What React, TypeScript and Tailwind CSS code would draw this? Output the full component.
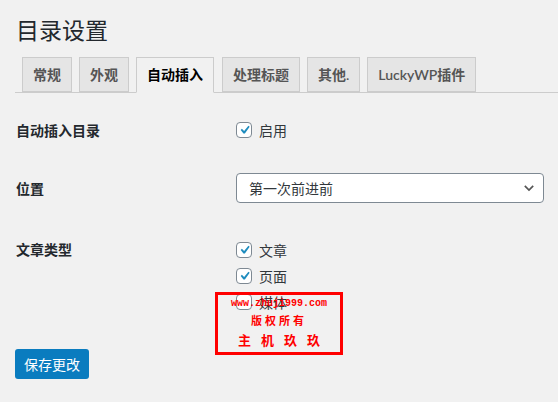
import React from "react";

const tabs = ["常规", "外观", "自动插入", "处理标题", "其他.", "LuckyWP插件"];

const CheckBox: React.FC<{ checked?: boolean }> = ({ checked }) => (
  <span className="flex items-center justify-center w-4 h-4 rounded-[4px] border border-[#7e8993] bg-white shrink-0">
    {checked && (
      <svg width="18" height="18" viewBox="0 0 20 20" className="-mr-px">
        <path d="M15.2 4.4l1.7 1.2-6.4 9.2H8.6L4.9 9.9l1.6-1.5 3 2.8z" fill="#1e8cbe" />
      </svg>
    )}
  </span>
);

export default function App() {
  return (
    <div
      className="min-h-[402px] w-full bg-[#f1f1f1] text-[#32373c] overflow-hidden"
      style={{ fontFamily: '"Noto Sans CJK SC", "Noto Sans", sans-serif' }}
    >
      {/* title */}
      <h1 className="pl-4 pt-[14px] text-[23px] leading-[30px] font-normal text-[#23282d]">目录设置</h1>

      {/* tabs */}
      <div
        className="ml-[15px] mt-[13px] flex pl-[7px] border-b border-[#ccc] h-[36px]"
        style={{ fontFamily: 'Lato, "Noto Sans CJK SC", sans-serif' }}
      >
        {tabs.map((t, i) => (
          <div
            key={t}
            className={
              i === 2
                ? "h-[36px] px-[10px] border border-[#ccc] border-b-[#f1f1f1] bg-[#f1f1f1] text-black text-[14px] font-semibold leading-[34px] mr-[8px]"
                : "h-[35px] px-[10px] border border-[#ccc] bg-[#e5e5e5] text-[#555] text-[14px] font-semibold leading-[33px] mr-[7px]"
            }
          >
            {t}
          </div>
        ))}
      </div>

      <div className="pl-4 text-[14px]">
        {/* row 1 */}
        <div className="flex items-center h-5 mt-[27px]">
          <div className="w-[220px] font-semibold text-[#23282d]">自动插入目录</div>
          <label className="flex items-center gap-[7px]">
            <CheckBox checked />
            <span>启用</span>
          </label>
        </div>

        {/* row 2 */}
        <div className="flex items-center h-[30px] mt-[33px]">
          <div className="w-[220px] font-semibold text-[#23282d]">位置</div>
          <div className="flex items-center justify-between w-[308px] h-[30px] rounded-[4px] border border-[#7e8993] bg-white pl-3 pr-[7px]">
            <span>第一次前进前</span>
            <svg width="14" height="14" viewBox="0 0 20 20">
              <path d="M4 7l6 6 6-6" fill="none" stroke="#555" strokeWidth="2.4" />
            </svg>
          </div>
        </div>

        {/* row 3 */}
        <div className="flex items-start mt-[34px]">
          <div className="w-[220px] font-semibold text-[#23282d] leading-5 mt-[2px]">文章类型</div>
          <div className="relative flex flex-col">
            {[
              ["文章", true],
              ["页面", true],
              ["媒体", false],
            ].map(([l, c]) => (
              <label key={l as string} className="flex items-center gap-[7px] h-[26px]">
                <CheckBox checked={c as boolean} />
                <span>{l as string}</span>
              </label>
            ))}

            {/* watermark */}
            <div className="absolute left-[-21px] top-[55px] w-[128px] h-[63px] border-[3px] border-[#ff0000] flex flex-col items-center text-[#ff0000] font-bold">
              <span className="text-[10px] leading-[14px] mt-[2px]" style={{ fontFamily: '"Liberation Mono", monospace' }}>
                www.zhuji999.com
              </span>
              <span className="text-[11px] leading-[15px] mt-[2px] tracking-[3px]">版权所有</span>
              <span className="text-[13px] leading-[18px] mt-[3px] tracking-[10px] pl-[10px]">主机玖玖</span>
            </div>
          </div>
        </div>

        {/* submit */}
        <button className="mt-[34px] -ml-px h-[30px] px-[9px] rounded-[3px] bg-[#0a7cbf] text-white text-[14px] leading-[28px]">
          保存更改
        </button>
      </div>
    </div>
  );
}
